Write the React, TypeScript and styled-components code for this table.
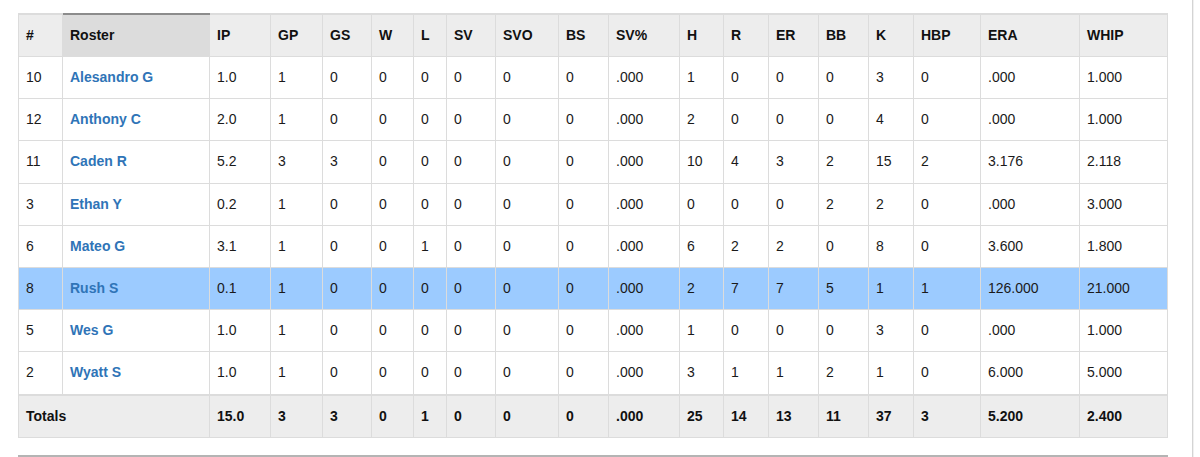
import React from "react";
import styled, { createGlobalStyle, css } from "styled-components";

const GlobalStyle = createGlobalStyle`
  html, body {
    margin: 0;
    padding: 0;
    background: #ffffff;
  }
  body {
    font-family: "Liberation Sans", Arial, Helvetica, sans-serif;
    font-size: 14px;
    color: #1a1a1a;
  }
`;

const Page = styled.div`
  display: flex;
  height: 457px;
  overflow: hidden;
`;

const Main = styled.div`
  width: 1168px;
  box-sizing: border-box;
  padding: 13px 0 0 18px;
  flex: none;
`;

const Sidebar = styled.div`
  margin-left: 24px;
  flex: 1;
  border-left: 1px solid #d4d4d4;
  box-shadow: inset 1px 0 0 #f0f0f0;
`;

const Table = styled.table`
  width: 1149px;
  border-collapse: collapse;
  table-layout: fixed;
  font-size: 14px;
`;

const HeadCell = styled.th<{ $sorted?: boolean }>`
  text-align: left;
  font-weight: bold;
  color: #111;
  background: #ededed;
  border: 1px solid #dcdcdc;
  border-top: 2px solid #dcdcdc;
  padding: 10px 7px;
  line-height: 21px;
  white-space: nowrap;
  ${(p) =>
    p.$sorted &&
    css`
      background: #dcdcdc;
      border-top-color: #8c8c8c;
    `}
`;

const Row = styled.tr<{ $highlight?: boolean }>`
  background: ${(p) => (p.$highlight ? "#9ccbff" : "#ffffff")};
`;

const Cell = styled.td`
  border: 1px solid #dcdcdc;
  padding: 10px 7px;
  line-height: 21.2px;
  color: #1a1a1a;
  white-space: nowrap;
`;

const PlayerLink = styled.a`
  color: #2f74b7;
  font-weight: bold;
  text-decoration: none;
`;

const TotalsRow = styled.tr`
  background: #ededed;
`;

const TotalCell = styled.td`
  border: 1px solid #dcdcdc;
  border-top: 2px solid #dcdcdc;
  padding: 10px 7px;
  line-height: 21px;
  font-weight: bold;
  color: #111;
`;

const NextSection = styled.div`
  margin-top: 17px;
  width: 1150px;
  border-top: 2px solid #b4b4b4;
  height: 10px;
`;

const widths = [44, 147, 61, 52, 49, 42, 33, 49, 63, 50, 71, 44, 45, 50, 50, 45, 67, 99, 88];

const headers = ["#", "Roster", "IP", "GP", "GS", "W", "L", "SV", "SVO", "BS", "SV%", "H", "R", "ER", "BB", "K", "HBP", "ERA", "WHIP"];

type Player = { num: string; name: string; stats: string[]; highlight?: boolean };

const players: Player[] = [
  { num: "10", name: "Alesandro G", stats: ["1.0", "1", "0", "0", "0", "0", "0", "0", ".000", "1", "0", "0", "0", "3", "0", ".000", "1.000"] },
  { num: "12", name: "Anthony C", stats: ["2.0", "1", "0", "0", "0", "0", "0", "0", ".000", "2", "0", "0", "0", "4", "0", ".000", "1.000"] },
  { num: "11", name: "Caden R", stats: ["5.2", "3", "3", "0", "0", "0", "0", "0", ".000", "10", "4", "3", "2", "15", "2", "3.176", "2.118"] },
  { num: "3", name: "Ethan Y", stats: ["0.2", "1", "0", "0", "0", "0", "0", "0", ".000", "0", "0", "0", "2", "2", "0", ".000", "3.000"] },
  { num: "6", name: "Mateo G", stats: ["3.1", "1", "0", "0", "1", "0", "0", "0", ".000", "6", "2", "2", "0", "8", "0", "3.600", "1.800"] },
  { num: "8", name: "Rush S", highlight: true, stats: ["0.1", "1", "0", "0", "0", "0", "0", "0", ".000", "2", "7", "7", "5", "1", "1", "126.000", "21.000"] },
  { num: "5", name: "Wes G", stats: ["1.0", "1", "0", "0", "0", "0", "0", "0", ".000", "1", "0", "0", "0", "3", "0", ".000", "1.000"] },
  { num: "2", name: "Wyatt S", stats: ["1.0", "1", "0", "0", "0", "0", "0", "0", ".000", "3", "1", "1", "2", "1", "0", "6.000", "5.000"] },
];

const totals = ["15.0", "3", "3", "0", "1", "0", "0", "0", ".000", "25", "14", "13", "11", "37", "3", "5.200", "2.400"];

export default function App() {
  return (
    <>
      <GlobalStyle />
      <Page>
        <Main>
          <Table>
            <colgroup>
              {widths.map((w, i) => (
                <col key={i} style={{ width: w }} />
              ))}
            </colgroup>
            <thead>
              <tr>
                {headers.map((h) => (
                  <HeadCell key={h} $sorted={h === "Roster"}>
                    {h}
                  </HeadCell>
                ))}
              </tr>
            </thead>
            <tbody>
              {players.map((p) => (
                <Row key={p.name} $highlight={p.highlight}>
                  <Cell>{p.num}</Cell>
                  <Cell>
                    <PlayerLink href="#">{p.name}</PlayerLink>
                  </Cell>
                  {p.stats.map((s, i) => (
                    <Cell key={i}>{s}</Cell>
                  ))}
                </Row>
              ))}
              <TotalsRow>
                <TotalCell colSpan={2}>Totals</TotalCell>
                {totals.map((t, i) => (
                  <TotalCell key={i}>{t}</TotalCell>
                ))}
              </TotalsRow>
            </tbody>
          </Table>
          <NextSection />
        </Main>
        <Sidebar />
      </Page>
    </>
  );
}
